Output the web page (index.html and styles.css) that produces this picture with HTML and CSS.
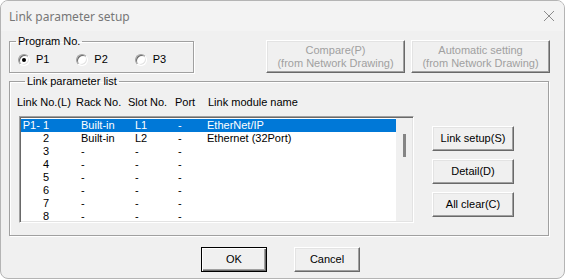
FILE: index.html
```html
<!DOCTYPE html>
<html lang="en">
<head>
<meta charset="UTF-8">
<meta name="viewport" content="width=device-width, initial-scale=1.0">
<title>Link parameter setup</title>
<link rel="stylesheet" href="styles.css">
</head>
<body>

<div class="window">
    <div class="titlebar">
        <span class="title">Link parameter setup</span>
        <svg class="close" width="12" height="12" viewBox="0 0 12 12">
            <path d="M1 1 L11 11 M11 1 L1 11" stroke="#8c8c8c" stroke-width="1" fill="none"/>
        </svg>
    </div>

    <div class="content">
        <div class="top-row">
            <fieldset class="group program">
                <legend>Program No.</legend>
                <div class="radios">
                    <label class="radio"><span class="circle checked"></span>P1</label>
                    <label class="radio"><span class="circle"></span>P2</label>
                    <label class="radio"><span class="circle"></span>P3</label>
                </div>
            </fieldset>
            <div class="top-buttons">
                <button class="btn wide" disabled>Compare(P)<br>(from Network Drawing)</button>
                <button class="btn wide" disabled>Automatic setting<br>(from Network Drawing)</button>
            </div>
        </div>

        <fieldset class="group list-group">
            <legend>Link parameter list</legend>
            <div class="list-header">
                <span>Link No.(L)</span>
                <span>Rack No.</span>
                <span>Slot No.</span>
                <span>Port</span>
                <span>Link module name</span>
            </div>
            <div class="list-area">
                <div class="listbox">
                    <div class="rows">
                        <div class="row selected"><span class="c1">P1- 1</span><span>Built-in</span><span>L1</span><span>-</span><span>EtherNet/IP</span></div>
                        <div class="row"><span class="c1">2</span><span>Built-in</span><span>L2</span><span>-</span><span>Ethernet (32Port)</span></div>
                        <div class="row"><span class="c1">3</span><span>-</span><span>-</span><span>-</span><span></span></div>
                        <div class="row"><span class="c1">4</span><span>-</span><span>-</span><span>-</span><span></span></div>
                        <div class="row"><span class="c1">5</span><span>-</span><span>-</span><span>-</span><span></span></div>
                        <div class="row"><span class="c1">6</span><span>-</span><span>-</span><span>-</span><span></span></div>
                        <div class="row"><span class="c1">7</span><span>-</span><span>-</span><span>-</span><span></span></div>
                        <div class="row"><span class="c1">8</span><span>-</span><span>-</span><span>-</span><span></span></div>
                    </div>
                    <div class="scrollbar"><div class="thumb"></div></div>
                </div>
                <div class="side-buttons">
                    <button class="btn side">Link setup(S)</button>
                    <button class="btn side">Detail(D)</button>
                    <button class="btn side">All clear(C)</button>
                </div>
            </div>
        </fieldset>

        <div class="footer">
            <button class="btn small default">OK</button>
            <button class="btn small">Cancel</button>
        </div>
    </div>
</div>

</body>
</html>
```

FILE: styles.css
```css
body {
    margin: 0;
    padding: 0;
    background: #ffffff;
    font-family: "Liberation Sans", Arial, sans-serif;
    font-size: 11px;
    color: #000;
}
.window {
    width: 565px;
    height: 279px;
    box-sizing: border-box;
    border: 1px solid #b4b4b4;
    border-radius: 8px;
    background: #f0f0f0;
    overflow: hidden;
}
.titlebar {
    height: 30px;
    display: flex;
    align-items: center;
    justify-content: space-between;
    padding: 0 9px 0 8px;
    background: #f3f3f3;
}
.title {
    font-family: "Noto Sans", "Open Sans", sans-serif;
    font-size: 12px;
    color: #777777;
}
.close {
    display: block;
}
.content {
    padding: 3px 0 0 8px;
}

/* group boxes */
.group {
    margin: 0;
    padding: 0;
    min-width: 0;
    border: 1px solid #a0a0a0;
    box-shadow: inset 1px 1px #fff, 1px 1px #fff;
}
.group legend {
    margin-left: 6px;
    padding: 0 2px;
    line-height: 14px;
}

.top-row {
    display: flex;
    align-items: flex-start;
}
.program {
    width: 185px;
    box-sizing: border-box;
}
.radios {
    display: flex;
    padding: 5px 0 6px 8px;
}
.radio {
    width: 62px;
    display: flex;
    align-items: center;
    gap: 6px;
    line-height: 13px;
}
.circle {
    width: 12px;
    height: 12px;
    box-sizing: border-box;
    border-radius: 50%;
    background: #fff;
    border: 1px solid;
    border-color: #a0a0a0 #fff #fff #a0a0a0;
    box-shadow: inset 1px 1px #696969, inset -1px -1px #e3e3e3;
    position: relative;
}
.circle.checked::after {
    content: "";
    position: absolute;
    left: 3px;
    top: 3px;
    width: 4px;
    height: 4px;
    border-radius: 50%;
    background: #000;
}

/* buttons */
.btn {
    font-family: "Liberation Sans", Arial, sans-serif;
    font-size: 11px;
    line-height: 13px;
    color: #000;
    background: #f0f0f0;
    border: 1px solid;
    border-color: #fff #696969 #696969 #fff;
    box-shadow: inset -1px -1px #a0a0a0, inset 1px 1px #e3e3e3;
    padding: 0;
    margin: 0;
    box-sizing: border-box;
}
.btn:disabled {
    color: #a0a0a0;
}
.btn.default {
    border: 1px solid #000;
    box-shadow: inset 1px 1px #fff, inset -1px -1px #696969, inset -2px -2px #a0a0a0;
}
.top-buttons {
    display: flex;
    gap: 6px;
    margin: 6px 0 0 72px;
}
.wide {
    width: 139px;
    height: 33px;
}

/* list group */
.list-group {
    width: 540px;
    box-sizing: border-box;
    margin-top: 1px;
    padding: 8px 0 12px 9px;
}
.list-header {
    display: grid;
    grid-template-columns: 59px 52px 47px 33px 1fr;
    margin-left: -2px;
    line-height: 13px;
}
.list-area {
    display: flex;
    align-items: flex-start;
    gap: 18px;
    margin-top: 7px;
}
.listbox {
    width: 395px;
    height: 107px;
    box-sizing: border-box;
    display: flex;
    padding: 2px 1px 1px 1px;
    background: #fff;
    border: 1px solid;
    border-color: #a0a0a0 #fff #fff #a0a0a0;
    box-shadow: inset 1px 1px #696969, inset -1px -1px #e3e3e3;
    overflow: hidden;
}
.rows {
    flex: 1;
}
.row {
    display: grid;
    grid-template-columns: 60px 54px 43px 29px 1fr;
    height: 13px;
    line-height: 13px;
    white-space: nowrap;
}
.row .c1 {
    text-align: right;
    padding-right: 32px;
}
.row.selected {
    background: #0078d7;
    color: #fff;
}
.scrollbar {
    width: 16px;
    margin: -1px 0 0 0;
    background: #f0f0f0;
    padding-top: 16px;
}
.thumb {
    width: 3px;
    height: 23px;
    margin-left: 7px;
    background: #858585;
}
.side-buttons {
    display: flex;
    flex-direction: column;
    gap: 8px;
    margin-top: 10px;
}
.side {
    width: 82px;
    height: 25px;
}

/* footer */
.footer {
    display: flex;
    justify-content: center;
    gap: 27px;
    margin: 11px 0 0 -8px;
    padding-right: 4px;
}
.small {
    width: 66px;
    height: 25px;
}
```
